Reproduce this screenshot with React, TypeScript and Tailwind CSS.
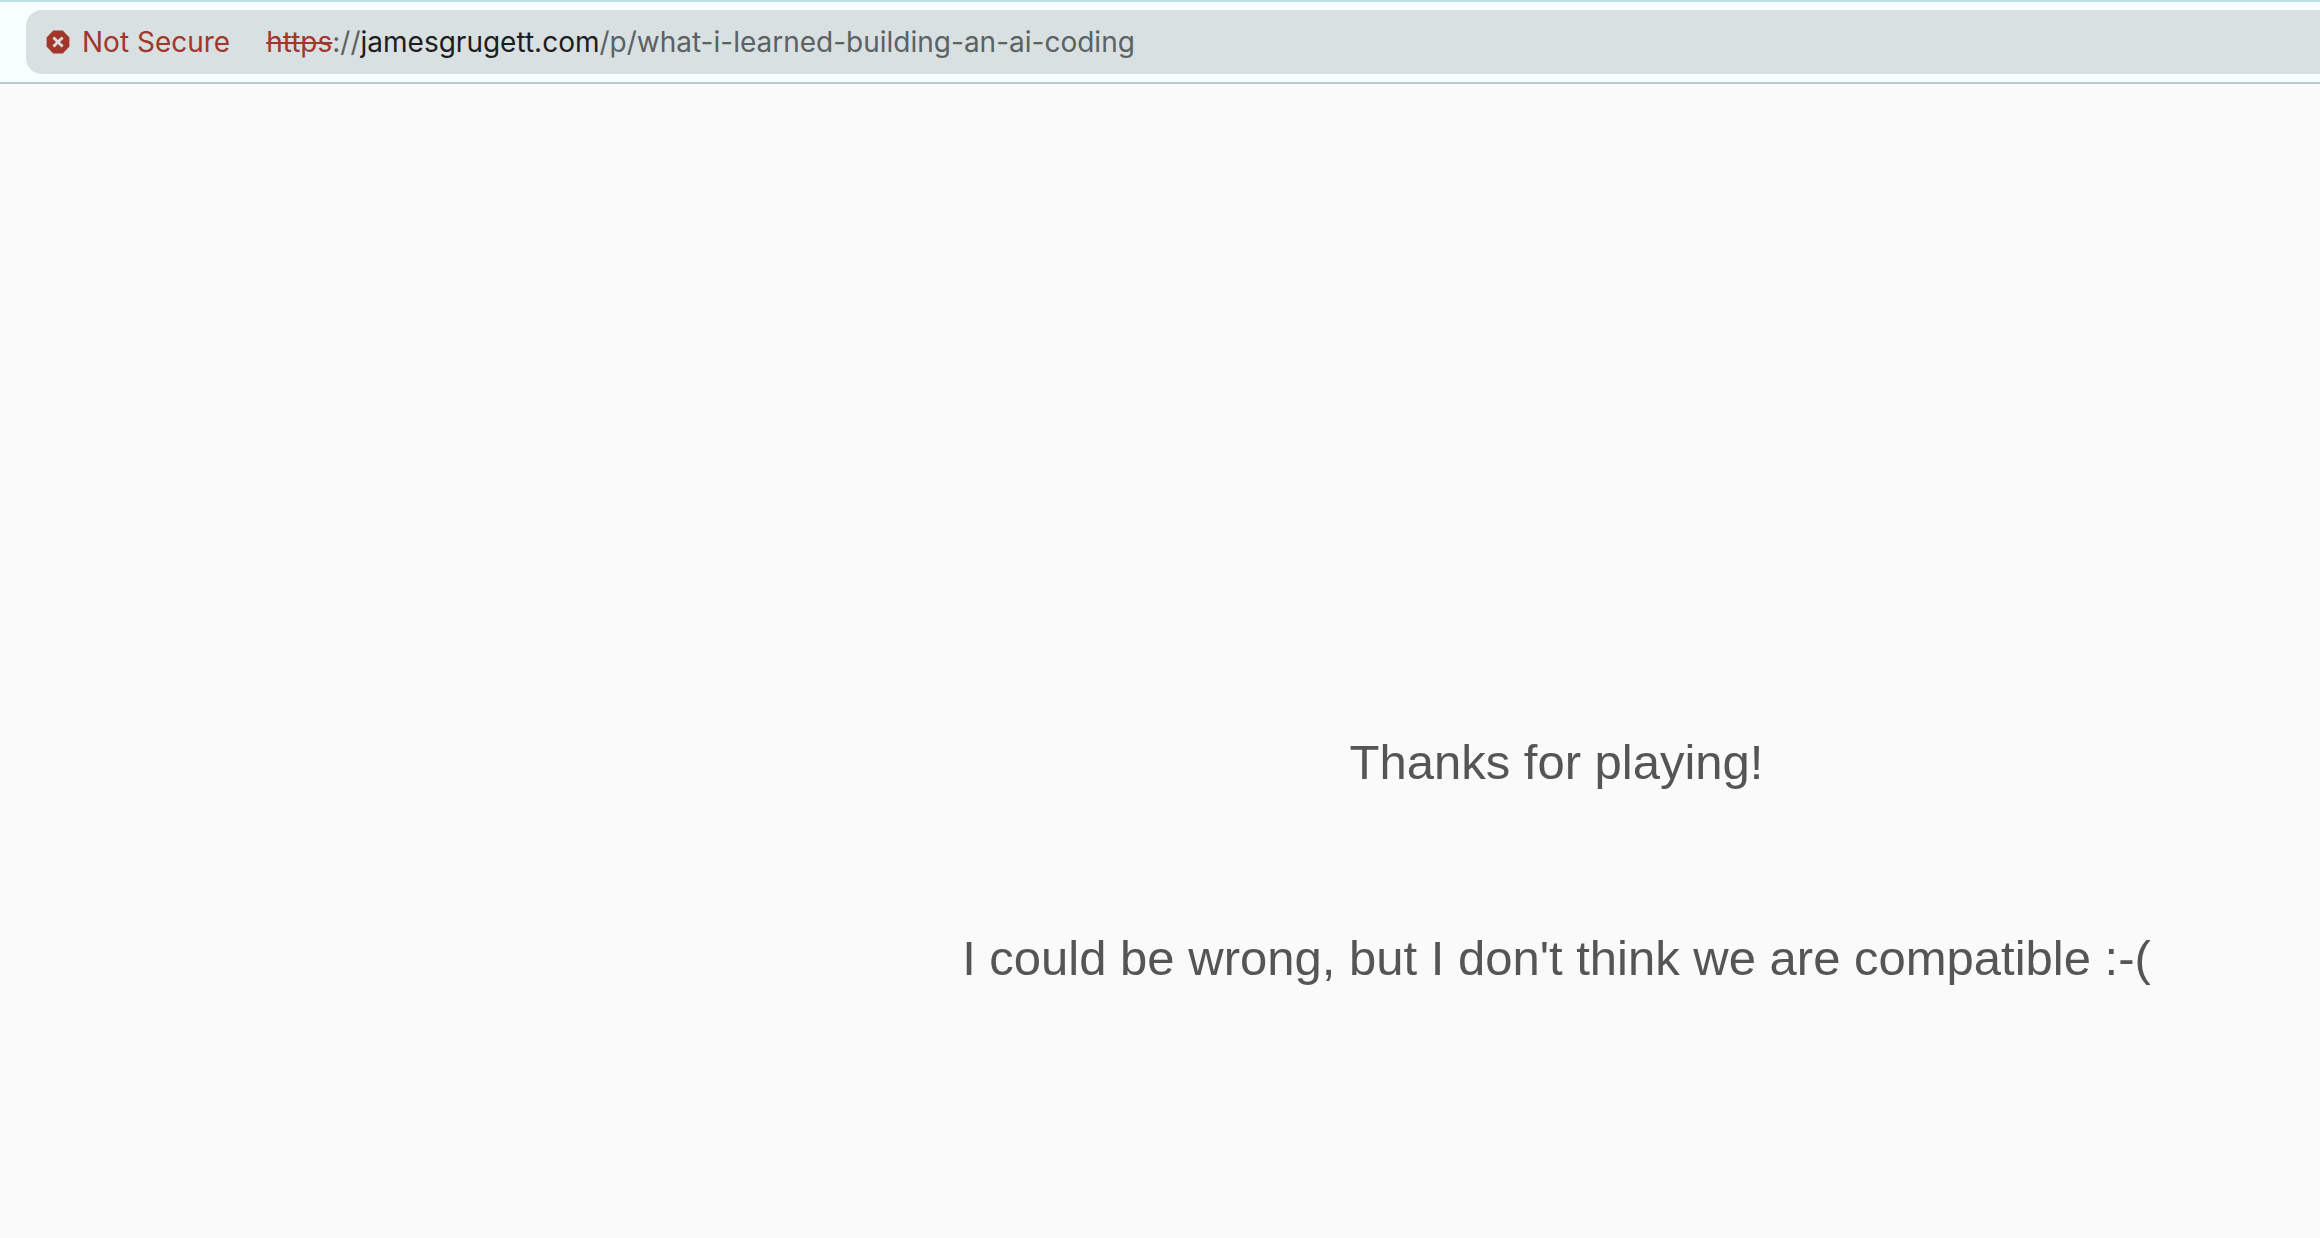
function DangerousIcon() {
  return (
    <svg viewBox="0 0 24 24" className="size-6 shrink-0" aria-hidden="true">
      <path
        d="M7.2 0.6h9.6l6.6 6.8v9.2l-6.6 6.8H7.2L0.6 16.6V7.4z"
        fill="#a1372b"
      />
      <path
        d="M7.4 7.4l9.2 9.2M16.6 7.4l-9.2 9.2"
        stroke="#d8dfe0"
        strokeWidth="2.8"
      />
    </svg>
  );
}

function AddressBar() {
  return (
    <header className="border-y-2 border-t-[#b9dfe0] border-b-[#b9cccb] bg-[#f6fffe] py-2 pl-[26px] font-['Inter',sans-serif]">
      <div className="flex h-16 items-center gap-9 rounded-l-2xl bg-[#d8e0e1] pl-5 text-[28px] leading-9">
        <button
          type="button"
          className="flex shrink-0 items-center gap-3 text-[#a1372b]"
        >
          <DangerousIcon />
          Not Secure
        </button>
        <div
          role="textbox"
          aria-label="Address and search bar"
          contentEditable
          suppressContentEditableWarning
          spellCheck={false}
          className="grow overflow-hidden whitespace-nowrap text-[#5c6162] outline-none"
        >
          <span className="text-[#a1372b] line-through decoration-2">
            https
          </span>
          ://<span className="text-[#1b1d1f]">jamesgrugett.com</span>
          /p/what-i-learned-building-an-ai-coding
        </div>
      </div>
    </header>
  );
}

export default function App() {
  return (
    <div className="min-h-screen bg-[#fafafa]">
      <AddressBar />
      <main className="flex flex-col items-center gap-[140px] pt-[650px] pl-[793px] text-center font-['Liberation_Sans',Arial,sans-serif] text-[49px] leading-14 text-[#555555]">
        <p>Thanks for playing!</p>
        <p>I could be wrong, but I don't think we are compatible :-(</p>
      </main>
    </div>
  );
}
